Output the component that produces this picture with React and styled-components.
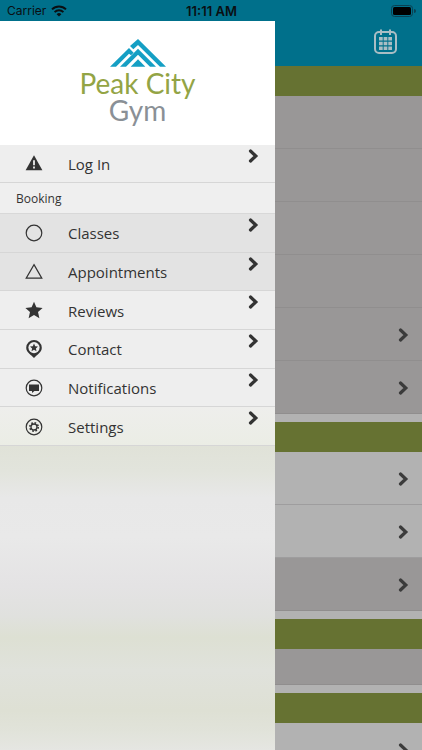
import React from "react";
import styled, { createGlobalStyle } from "styled-components";

const GlobalStyle = createGlobalStyle`
  * {
    box-sizing: border-box;
  }
  body {
    margin: 0;
    font-family: "Open Sans", "Noto Sans", sans-serif;
    color: #333333;
  }
`;

const Page = styled.div`
  height: 100vh;
  display: flex;
  flex-direction: column;
  overflow: hidden;
  background: #b2b2b2;
`;

const StatusBar = styled.div`
  display: grid;
  grid-template-columns: 1fr auto 1fr;
  align-items: center;
  height: 21px;
  padding: 0 6px 0 7px;
  background: #00708b;
  color: #0a0f12;
  font-family: Inter, "Liberation Sans", sans-serif;
  font-size: 12px;
`;

const Carrier = styled.div`
  display: flex;
  align-items: center;
  gap: 5px;
`;

const Clock = styled.div`
  font-size: 13px;
  font-weight: 600;
`;

const BatteryIcon = styled.svg`
  justify-self: end;
`;

const Stage = styled.div`
  flex: 1;
  min-height: 0;
  position: relative;
`;

const TopBar = styled.header`
  display: flex;
  justify-content: flex-end;
  align-items: center;
  height: 45px;
  padding-right: 24px;
  background: #00708b;
`;

const IconButton = styled.button`
  display: flex;
  margin-bottom: 3px;
  padding: 0;
  border: 0;
  background: none;
  color: #a9bdc4;
`;

const Section = styled.section`
  margin-bottom: 8px;
`;

const Banner = styled.div`
  height: 30px;
  background: #667232;
`;

const Row = styled.div`
  display: flex;
  justify-content: flex-end;
  align-items: center;
  height: ${props => (props.$short ? "36px" : "53px")};
  padding: 1px 13px 0 0;
  background: ${props => (props.$dark ? "#999797" : "#b2b2b2")};
  box-shadow: inset 0 -1px ${props => (props.$dark ? "#908e8e" : "#9e9d9e")};
  color: #3b3b3b;
`;

const Drawer = styled.aside`
  position: absolute;
  top: 0;
  bottom: 0;
  left: 0;
  width: calc(100% - 147px);
  display: flex;
  flex-direction: column;
  background: #e6e6e6;
`;

const Brand = styled.div`
  display: flex;
  flex-direction: column;
  align-items: center;
  height: 124px;
  padding-top: 18px;
  background: #ffffff;
  font-family: Lato, "Open Sans", sans-serif;
  font-size: 28px;
  line-height: 27px;
`;

const BrandCity = styled.div`
  margin-top: 3px;
  color: #93a445;
`;

const BrandGym = styled.div`
  color: #8a9096;
`;

const Menu = styled.nav`
  display: flex;
  flex-direction: column;
`;

const MenuList = styled.div`
  display: grid;
  grid-auto-rows: 1fr;
  height: ${props => props.$height};
`;

const MenuItem = styled.a`
  display: flex;
  align-items: center;
  padding: 0 16px 0 25px;
  background: ${props => props.$bg || "#eeeeee"};
  box-shadow: inset 0 -1px #d6d6d6;
  color: #333333;
  font-size: 15px;
  line-height: 22px;
  text-decoration: none;
`;

const MenuIcon = styled.span`
  display: flex;
  width: 43px;
`;

const MenuLabel = styled.span`
  flex: 1;
`;

const MenuArrow = styled.span`
  display: flex;
  align-self: flex-start;
  padding-top: 4px;
`;

const MenuHeading = styled.div`
  height: 31px;
  padding-left: 16px;
  background: #efefef;
  box-shadow: inset 0 -1px #d8d8d8;
  font-size: 12px;
  line-height: 31px;
`;

const DrawerFill = styled.div`
  flex: 1;
  background: linear-gradient(
    #e0e2d8 0%,
    #e2e4dc 8%,
    #e8e8e8 17%,
    #e9e9e9 30%,
    #e4e3e4 46%,
    #e0e1de 56%,
    #dde0d3 63%,
    #e0e2dc 74%,
    #dee0d4 87%,
    #e1e3da 94%,
    #e5e6e2 100%
  );
`;

const Chevron = () => (
  <svg width="11" height="14" viewBox="0 0 11 14">
    <path d="M2.5 2 L7.8 7 L2.5 12" fill="none" stroke="currentColor" strokeWidth="3.2" strokeLinecap="round" />
  </svg>
);

const Glyph = ({ children }) => (
  <svg width="18" height="20" viewBox="0 0 18 20" fill="none" stroke="#333333" strokeWidth="1.2">
    {children}
  </svg>
);

const icons = {
  warning: (
    <Glyph>
      <path d="M9 1.2 L17.4 16.2 H0.6 Z" fill="#333333" stroke="none" />
      <path d="M9 6.2 V11.2 M9 12.6 V14.4" stroke="#eeeeee" strokeWidth="1.8" />
    </Glyph>
  ),
  circle: (
    <Glyph>
      <circle cx="9" cy="10" r="7.8" />
    </Glyph>
  ),
  triangle: (
    <Glyph>
      <path d="M9 2.6 L16.8 16.2 H1.2 Z" />
    </Glyph>
  ),
  star: (
    <Glyph>
      <path
        d="M9 0.8 L11.4 6.3 L17.6 6.9 L13 11 L14.4 17.2 L9 14 L3.6 17.2 L5 11 L0.4 6.9 L6.6 6.3 Z"
        fill="#333333"
        stroke="none"
      />
    </Glyph>
  ),
  pin: (
    <Glyph>
      <path
        d="M9 1 a7.8 7.8 0 0 1 7.8 7.7 C16.8 13.5 11.5 16 9 19 C6.5 16 1.2 13.5 1.2 8.7 A7.8 7.8 0 0 1 9 1 Z"
        fill="#333333"
        stroke="none"
      />
      <circle cx="9" cy="8.6" r="5.6" fill="#eeeeee" stroke="none" />
      <path
        d="M9 4.6 L10.2 7.2 L13 7.5 L10.9 9.4 L11.5 12.2 L9 10.8 L6.5 12.2 L7.1 9.4 L5 7.5 L7.8 7.2 Z"
        fill="#333333"
        stroke="none"
      />
    </Glyph>
  ),
  message: (
    <Glyph>
      <circle cx="9" cy="10" r="7.8" />
      <path d="M4 6.4 H14 V13 H9.4 L7 15 V13 H4 Z" fill="#333333" stroke="none" />
    </Glyph>
  ),
  gear: (
    <Glyph>
      <circle cx="9" cy="10" r="7.8" />
      <circle cx="9" cy="10" r="3" strokeWidth="1.3" />
      <circle cx="9" cy="10" r="4.2" strokeWidth="1.6" strokeDasharray="1.65 1.65" />
    </Glyph>
  )
};

const Mountain = () => (
  <svg width="56" height="28" viewBox="0 0 168 84" fill="#159fc4">
    <path d="M60 21 L84 0 L168 83 H150 L84 18 L70 31 Z" />
    <path d="M0 83 L57 27 L71 41 L63 49 L57 44 L18 83 Z" />
    <path d="M30 83 L84 29 L138 83 H120 L84 47 L48 83 Z" />
    <path d="M62 83 L84 61 L106 83 Z" />
  </svg>
);

const bookingItems = [
  { label: "Classes", icon: "circle", bg: "#e3e3e3" },
  { label: "Appointments", icon: "triangle", bg: "#e3e3e3" },
  { label: "Reviews", icon: "star" },
  { label: "Contact", icon: "pin" },
  { label: "Notifications", icon: "message" },
  { label: "Settings", icon: "gear", bg: "linear-gradient(#eeeeec, #ebede5)" }
];

const sections = [
  {
    rows: [
      { dark: true },
      { dark: true },
      { dark: true },
      { dark: true },
      { dark: true, arrow: true },
      { dark: true, arrow: true }
    ]
  },
  { rows: [{ arrow: true }, { arrow: true }, { dark: true, arrow: true }] },
  { rows: [{ dark: true, short: true }] },
  { rows: [{ arrow: true }] }
];

const Item = ({ label, icon, bg }) => (
  <MenuItem href="#" $bg={bg}>
    <MenuIcon>{icons[icon]}</MenuIcon>
    <MenuLabel>{label}</MenuLabel>
    <MenuArrow>
      <Chevron />
    </MenuArrow>
  </MenuItem>
);

class App extends React.Component {
  render() {
    return (
      <Page>
        <GlobalStyle />
        <StatusBar>
          <Carrier>
            Carrier
            <svg width="16" height="12" viewBox="0 0 16 12" fill="none" stroke="currentColor" strokeWidth="2">
              <path d="M1 4.4 A10 10 0 0 1 15 4.4" />
              <path d="M3.6 7.1 A6.3 6.3 0 0 1 12.4 7.1" />
              <path d="M8 11.6 L5.6 9.2 A3.4 3.4 0 0 1 10.4 9.2 Z" fill="currentColor" stroke="none" />
            </svg>
          </Carrier>
          <Clock>11:11 AM</Clock>
          <BatteryIcon width="25" height="12" viewBox="0 0 25 12">
            <rect x="0.5" y="0.5" width="21" height="11" rx="3" fill="none" stroke="#0a4152" />
            <rect x="2" y="2" width="18" height="8" rx="1.5" fill="#000000" />
            <path d="M23 4 a2 2 0 0 1 0 4 Z" fill="#0a4152" />
          </BatteryIcon>
        </StatusBar>
        <Stage>
          <TopBar>
            <IconButton aria-label="Calendar">
              <svg width="25" height="26" viewBox="0 0 25 26" fill="none" stroke="currentColor" strokeWidth="2">
                <rect x="2" y="3" width="21" height="21" rx="4" />
                <path d="M8 0.5 V6 M17 0.5 V6" />
                <path d="M6 9.8 H19 M6 14.5 H19 M6 19.2 H19" strokeWidth="3.6" strokeDasharray="3.7 0.95" />
              </svg>
            </IconButton>
          </TopBar>
          {sections.map((section, i) => (
            <Section key={i}>
              <Banner />
              {section.rows.map((row, j) => (
                <Row key={j} $dark={row.dark} $short={row.short}>
                  {row.arrow && <Chevron />}
                </Row>
              ))}
            </Section>
          ))}
          <Drawer>
            <Brand>
              <Mountain />
              <BrandCity>Peak City</BrandCity>
              <BrandGym>Gym</BrandGym>
            </Brand>
            <Menu>
              <MenuList $height="38px">
                <Item label="Log In" icon="warning" />
              </MenuList>
              <MenuHeading>Booking</MenuHeading>
              <MenuList $height="232px">
                {bookingItems.map(item => (
                  <Item key={item.label} {...item} />
                ))}
              </MenuList>
            </Menu>
            <DrawerFill />
          </Drawer>
        </Stage>
      </Page>
    );
  }
}

export default App;
